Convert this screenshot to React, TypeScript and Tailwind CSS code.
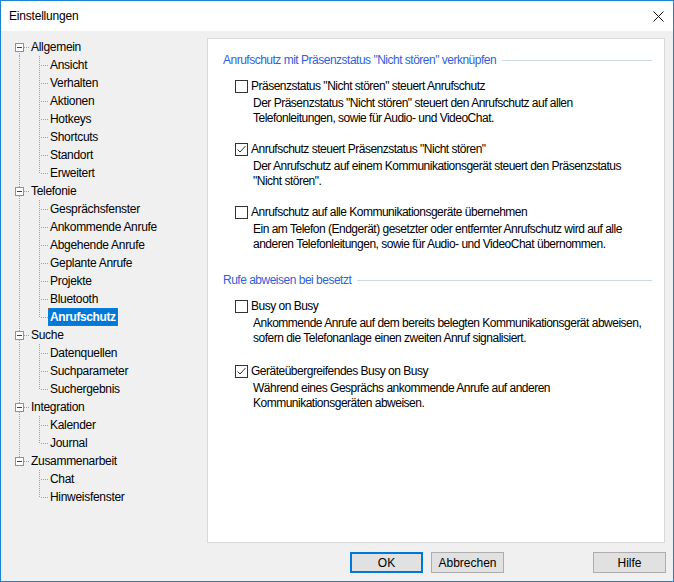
import React from "react"

interface TreeGroup {
  label: string
  children: string[]
}

const tree: TreeGroup[] = [
  { label: "Allgemein", children: ["Ansicht", "Verhalten", "Aktionen", "Hotkeys", "Shortcuts", "Standort", "Erweitert"] },
  {
    label: "Telefonie",
    children: ["Gesprächsfenster", "Ankommende Anrufe", "Abgehende Anrufe", "Geplante Anrufe", "Projekte", "Bluetooth", "Anrufschutz"],
  },
  { label: "Suche", children: ["Datenquellen", "Suchparameter", "Suchergebnis"] },
  { label: "Integration", children: ["Kalender", "Journal"] },
  { label: "Zusammenarbeit", children: ["Chat", "Hinweisfenster"] },
]

const selected = "Anrufschutz"
const DOT = "#a0a0a0"

function GroupGutter({ first, last }: { first: boolean; last: boolean }) {
  return (
    <svg width="28" height="18" className="shrink-0" shapeRendering="crispEdges">
      <line x1="18.5" y1={first ? 9 : 0} x2="18.5" y2={last ? 9 : 18} stroke={DOT} strokeDasharray="1 1" />
      <line x1="23" y1="9.5" x2="28" y2="9.5" stroke={DOT} strokeDasharray="1 1" />
      <rect x="14.5" y="5.5" width="8" height="8" fill="#fff" stroke="#919191" />
      <line x1="16" y1="9.5" x2="21" y2="9.5" stroke="#1f4496" />
    </svg>
  )
}

function ChildGutter({ rootLine, lastChild }: { rootLine: boolean; lastChild: boolean }) {
  return (
    <svg width="47" height="18" className="shrink-0" shapeRendering="crispEdges">
      {rootLine && <line x1="18.5" y1="0" x2="18.5" y2="18" stroke={DOT} strokeDasharray="1 1" />}
      <line x1="38.5" y1="0" x2="38.5" y2={lastChild ? 10 : 18} stroke={DOT} strokeDasharray="1 1" />
      <line x1="40" y1="9.5" x2="47" y2="9.5" stroke={DOT} strokeDasharray="1 1" />
    </svg>
  )
}

function TreeLabel({ text }: { text: string }) {
  if (text === selected) {
    return (
      <span className="h-[18px] px-[1px] flex items-center bg-[#0078d7] text-white font-bold border border-dotted border-[#a0631c] tracking-[-0.4px]">
        {text}
      </span>
    )
  }
  return <span className="h-[18px] px-[2px] flex items-center">{text}</span>
}

function Tree() {
  return (
    <div className="w-[206px] shrink-0 text-black tracking-[-0.3px]">
      {tree.map((group, gi) => {
        const lastGroup = gi === tree.length - 1
        return (
          <div key={group.label}>
            <div className="flex h-[18px] items-center">
              <GroupGutter first={gi === 0} last={lastGroup} />
              <TreeLabel text={group.label} />
            </div>
            {group.children.map((child, ci) => (
              <div key={child} className="flex h-[18px] items-center">
                <ChildGutter rootLine={!lastGroup} lastChild={ci === group.children.length - 1} />
                <TreeLabel text={child} />
              </div>
            ))}
          </div>
        )
      })}
    </div>
  )
}

function Checkbox({ checked }: { checked: boolean }) {
  return (
    <svg width="13" height="13" className="shrink-0" shapeRendering="crispEdges">
      <rect x="0.5" y="0.5" width="12" height="12" fill="#fff" stroke="#333" />
      {checked && (
        <polyline
          points="2.5,6.5 5,9 10.5,3"
          fill="none"
          stroke="#333"
          strokeWidth="1"
          shapeRendering="geometricPrecision"
        />
      )}
    </svg>
  )
}

interface OptionProps {
  label: string
  lines: string[]
  checked: boolean
  className?: string
}

function Option({ label, lines, checked, className }: OptionProps) {
  return (
    <div className={"ml-[12px] " + (className ?? "")}>
      <div className="flex h-[16px] items-center gap-[3px]">
        <Checkbox checked={checked} />
        <span className="whitespace-nowrap">{label}</span>
      </div>
      <div className="pl-[18px] mt-[2px] leading-[15px]">
        {lines.map((l) => (
          <div key={l} className="whitespace-nowrap">
            {l}
          </div>
        ))}
      </div>
    </div>
  )
}

function SectionHeader({ text, className }: { text: string; className?: string }) {
  return (
    <div className={"flex h-[16px] items-center mr-[12px] " + (className ?? "")}>
      <span className="text-[#2f62d6] whitespace-nowrap">{text}</span>
      <div className="flex-1 h-px bg-[#ccd8e4] ml-[6px]" />
    </div>
  )
}

function Button({ label, primary }: { label: string; primary?: boolean }) {
  return (
    <button
      className={
        "w-[73px] h-[21px] bg-[#e1e1e1] text-black flex items-center justify-center " +
        (primary ? "border-2 border-[#0078d7]" : "border border-[#adadad]")
      }
    >
      {label}
    </button>
  )
}

export default function App() {
  return (
    <div className="w-[674px] h-[582px] border border-[#1883d7] bg-[#f0f0f0] flex flex-col font-['Liberation_Sans',Arial,sans-serif] text-[12px] text-black">
      <div className="h-[30px] bg-white flex items-center justify-between pl-[8px] pr-[9px] shrink-0">
        <span className="tracking-[-0.2px]">Einstellungen</span>
        <svg width="11" height="11" viewBox="0 0 11 11">
          <path d="M0.5 0.5 L10.5 10.5 M10.5 0.5 L0.5 10.5" stroke="#111" strokeWidth="1" />
        </svg>
      </div>

      <div className="flex pt-[7px] shrink-0">
        <Tree />
        <div className="w-[458px] h-[505px] bg-white border border-[#d9d9d9] pl-[15px] pt-[13px] tracking-[-0.5px]">
          <SectionHeader text={'Anrufschutz mit Präsenzstatus "Nicht stören" verknüpfen'} />
          <Option
            className="mt-[10px]"
            checked={false}
            label={'Präsenzstatus "Nicht stören" steuert Anrufschutz'}
            lines={[
              'Der Präsenzstatus "Nicht stören" steuert den Anrufschutz auf allen',
              "Telefonleitungen, sowie für Audio- und VideoChat.",
            ]}
          />
          <Option
            className="mt-[15px]"
            checked={true}
            label={'Anrufschutz steuert Präsenzstatus "Nicht stören"'}
            lines={[
              "Der Anrufschutz auf einem Kommunikationsgerät steuert den Präsenzstatus",
              '"Nicht stören".',
            ]}
          />
          <Option
            className="mt-[15px]"
            checked={false}
            label="Anrufschutz auf alle Kommunikationsgeräte übernehmen"
            lines={[
              "Ein am Telefon (Endgerät) gesetzter oder entfernter Anrufschutz wird auf alle",
              "anderen Telefonleitungen, sowie für Audio- und VideoChat übernommen.",
            ]}
          />
          <SectionHeader className="mt-[20px]" text="Rufe abweisen bei besetzt" />
          <Option
            className="mt-[10px]"
            checked={false}
            label="Busy on Busy"
            lines={[
              "Ankommende Anrufe auf dem bereits belegten Kommunikationsgerät abweisen,",
              "sofern die Telefonanlage einen zweiten Anruf signalisiert.",
            ]}
          />
          <Option
            className="mt-[17px]"
            checked={true}
            label="Geräteübergreifendes Busy on Busy"
            lines={[
              "Während eines Gesprächs ankommende Anrufe auf anderen",
              "Kommunikationsgeräten abweisen.",
            ]}
          />
        </div>
      </div>

      <div className="flex pt-[9px] pl-[349px] shrink-0">
        <Button label="OK" primary />
        <div className="ml-[8px]">
          <Button label="Abbrechen" />
        </div>
        <div className="ml-[89px]">
          <Button label="Hilfe" />
        </div>
      </div>
    </div>
  )
}
